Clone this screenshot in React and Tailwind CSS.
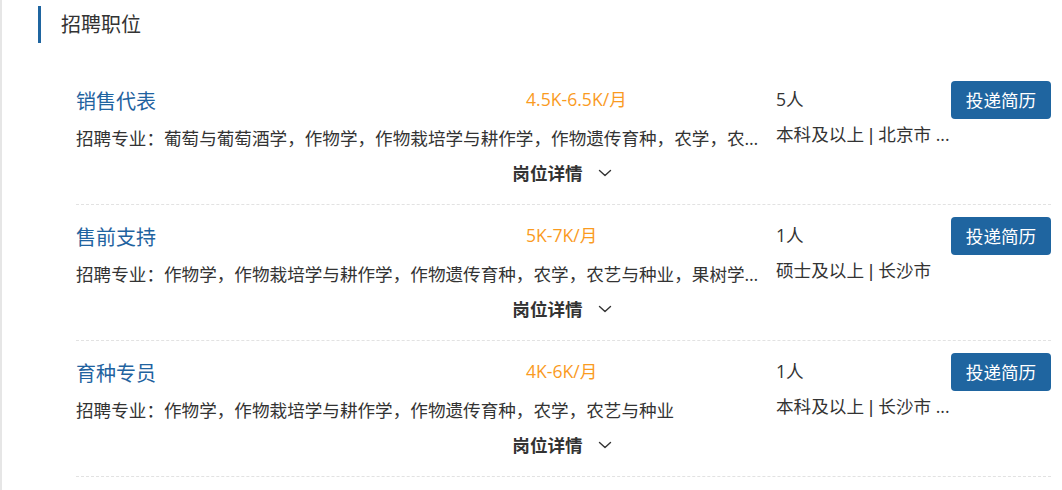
import React from "react";

const jobs = [
  {
    title: "销售代表",
    salary: "4.5K-6.5K/月",
    count: "5人",
    degree: "本科及以上",
    city: "北京市 ...",
    major:
      "招聘专业：葡萄与葡萄酒学，作物学，作物栽培学与耕作学，作物遗传育种，农学，农艺与种业，果树学",
  },
  {
    title: "售前支持",
    salary: "5K-7K/月",
    count: "1人",
    degree: "硕士及以上",
    city: "长沙市",
    major:
      "招聘专业：作物学，作物栽培学与耕作学，作物遗传育种，农学，农艺与种业，果树学，蔬菜学，茶学",
  },
  {
    title: "育种专员",
    salary: "4K-6K/月",
    count: "1人",
    degree: "本科及以上",
    city: "长沙市 ...",
    major: "招聘专业：作物学，作物栽培学与耕作学，作物遗传育种，农学，农艺与种业",
  },
];

function Chevron() {
  return (
    <svg width="14" height="8" viewBox="0 0 14 8" fill="none">
      <polyline
        points="1.5,1.5 7,6.5 12.5,1.5"
        stroke="#333333"
        strokeWidth="1.4"
        strokeLinecap="round"
        strokeLinejoin="round"
      />
    </svg>
  );
}

function JobRow({ job }) {
  return (
    <div className="h-[136px] border-b border-dashed border-[#e2e2e2] flex flex-col">
      <div className="flex h-[84px] pt-[12px]">
        <div className="w-[700px] flex flex-col">
          <div className="flex items-start mt-[5.5px]">
            <div className="w-[450px] text-[20px] leading-[30px] text-[#1f63a0]">{job.title}</div>
            <div className="text-[17.6px] leading-[24px] text-[#fa9b1f]">{job.salary}</div>
          </div>
          <div className="mt-[9px] w-[690px] truncate text-[17.6px] leading-[24px] text-[#333333]">
            {job.major}
          </div>
        </div>
        <div className="w-[175px] flex flex-col pt-[5.5px]">
          <div className="text-[17.6px] leading-[24px] text-[#333333]">{job.count}</div>
          <div className="mt-[11px] whitespace-nowrap text-[17.6px] leading-[24px] text-[#333333]">
            {job.degree}
            <span className="font-['Liberation_Sans']"> | </span>
            {job.city}
          </div>
        </div>
        <div className="w-[100px]">
          <button className="w-[100px] h-[38px] rounded-[4px] bg-[#1f65a0] text-white text-[17.6px] leading-[24px]">
            投递简历
          </button>
        </div>
      </div>
      <div className="mt-[7.5px] h-[24px] flex items-center justify-center gap-[15px] pr-[3px]">
        <span className="text-[17.6px] leading-[24px] font-bold text-[#333333]">岗位详情</span>
        <Chevron />
      </div>
    </div>
  );
}

export default function App() {
  return (
    <div
      className="w-[1062px] h-[490px] bg-white border-l-2 border-[#e6e6e6] overflow-hidden"
      style={{ fontFamily: '"Open Sans", "Noto Sans CJK SC", sans-serif' }}
    >
      <div className="flex items-center pt-[6px] pl-[36px]">
        <div className="w-[3px] h-[37px] bg-[#1f65a0]" />
        <div className="ml-[20px] text-[20px] leading-[30px] text-[#333333]">招聘职位</div>
      </div>
      <div className="ml-[74px] w-[975px] mt-[26px]">
        {jobs.map((j) => (
          <JobRow key={j.title} job={j} />
        ))}
      </div>
    </div>
  );
}
